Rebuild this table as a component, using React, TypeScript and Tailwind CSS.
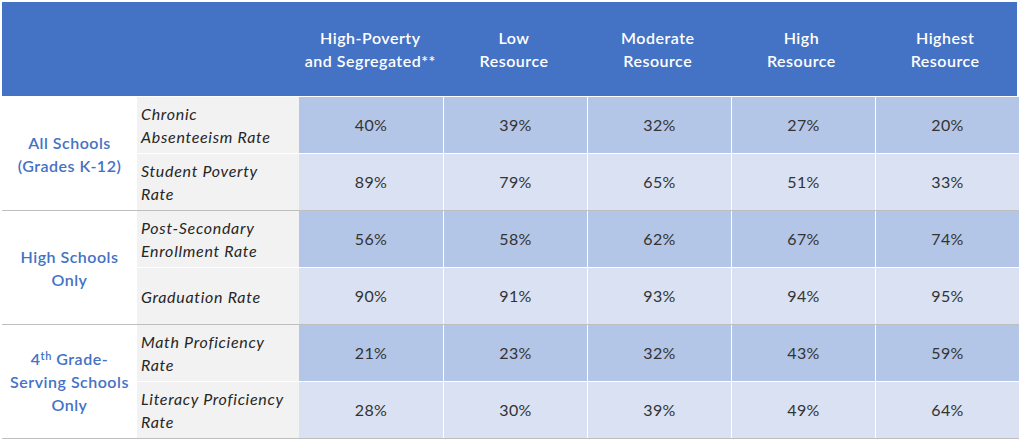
import React from "react";

const cols = [
  ["High-Poverty", "and Segregated**"],
  ["Low", "Resource"],
  ["Moderate", "Resource"],
  ["High", "Resource"],
  ["Highest", "Resource"],
];

type Row = { label: string[]; values: string[] };
type Group = { title: React.ReactNode; rows: Row[] };

const groups: Group[] = [
  {
    title: (
      <>
        All Schools
        <br />
        (Grades K-12)
      </>
    ),
    rows: [
      { label: ["Chronic", "Absenteeism Rate"], values: ["40%", "39%", "32%", "27%", "20%"] },
      { label: ["Student Poverty", "Rate"], values: ["89%", "79%", "65%", "51%", "33%"] },
    ],
  },
  {
    title: (
      <>
        High Schools
        <br />
        Only
      </>
    ),
    rows: [
      { label: ["Post-Secondary", "Enrollment Rate"], values: ["56%", "58%", "62%", "67%", "74%"] },
      { label: ["Graduation Rate"], values: ["90%", "91%", "93%", "94%", "95%"] },
    ],
  },
  {
    title: (
      <>
        4<sup className="text-[11px]">th</sup> Grade-
        <br />
        Serving Schools
        <br />
        Only
      </>
    ),
    rows: [
      { label: ["Math Proficiency", "Rate"], values: ["21%", "23%", "32%", "43%", "59%"] },
      { label: ["Literacy Proficiency", "Rate"], values: ["28%", "30%", "39%", "49%", "64%"] },
    ],
  },
];

function DataRow({ row, dark }: { row: Row; dark: boolean }) {
  return (
    <div className="flex h-[56px]">
      <div className="w-[162px] bg-[#F2F2F2] flex flex-col justify-center pl-[4px] italic text-[16px] leading-[23px] text-[#262626] tracking-[0.7px] whitespace-nowrap">
        {row.label.map((l) => (
          <span key={l}>{l}</span>
        ))}
      </div>
      {row.values.map((v, i) => (
        <div
          key={i}
          className={`w-[144px] flex items-center justify-center text-[16px] tracking-[0.3px] text-[#333333] ${
            dark ? "bg-[#B4C6E7]" : "bg-[#D9E1F2]"
          } ${i > 0 ? "border-l border-white" : ""}`}
        >
          {v}
        </div>
      ))}
    </div>
  );
}

export default function App() {
  return (
    <div
      className="w-[1024px] h-[441px] bg-white pt-[2px] pl-[2px] overflow-hidden"
      style={{ fontFamily: "Lato, 'Noto Sans', sans-serif" }}
    >
      <div className="flex h-[94px] w-[1015px] bg-[#4472C4] text-white font-semibold text-[16px] leading-[23px] tracking-[0.5px]">
        <div className="w-[297px]" />
        {cols.map((c) => (
          <div key={c[0]} className="w-[144px] flex flex-col items-center justify-center whitespace-nowrap">
            <span>{c[0]}</span>
            <span>{c[1]}</span>
          </div>
        ))}
      </div>
      <div className="h-[1px]" />
      {groups.map((g, gi) => (
        <div key={gi} className="w-[1017px] border-b border-[#BFBFBF] flex">
          <div className="w-[135px] flex items-center justify-center text-center text-[#4472C4] font-semibold text-[16px] leading-[23px] tracking-[0.5px] whitespace-nowrap">
            <div>{g.title}</div>
          </div>
          <div className="flex flex-col">
            <DataRow row={g.rows[0]} dark />
            <div className="h-[1px] bg-white" />
            <DataRow row={g.rows[1]} dark={false} />
          </div>
        </div>
      ))}
    </div>
  );
}
